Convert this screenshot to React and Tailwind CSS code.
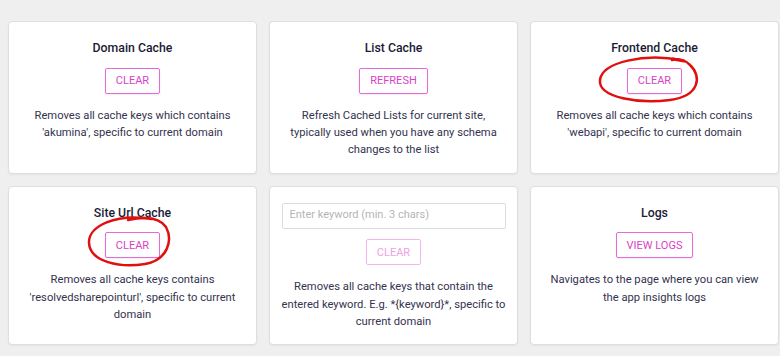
import React from "react";

function Btn({ children, disabled }) {
  return (
    <button
      className={
        disabled
          ? "h-[26px] px-[10px] border border-[#f3b5ec] rounded-[2px] text-[11px] leading-none uppercase text-[#ef9fe4] bg-white"
          : "h-[26px] px-[10px] border border-[#e86ad9] rounded-[2px] text-[11px] leading-none uppercase text-[#d93fc8] bg-white shadow-[0_1px_2px_rgba(0,0,0,0.08)]"
      }
    >
      {children}
    </button>
  );
}

function Card({ title, btn, desc, input, disabled }) {
  return (
    <div className="bg-white border border-[#dedde3] rounded-[4px] shadow-[0_1px_2px_rgba(0,0,0,0.05)] flex flex-col items-center px-[11.5px] pb-[14px] pt-[16px]">
      {input ? (
        <div className="w-full h-[26px] border border-[#dcdcdc] rounded-[2px] flex items-center px-[7px] text-[11px] text-[#b5b5b5]">
          Enter keyword (min. 3 chars)
        </div>
      ) : (
        <div className="text-[12.3px] leading-[20px] font-medium text-[#1c1a36]">{title}</div>
      )}
      <div className={input ? "mt-[10px]" : "mt-[9px]"}>
        <Btn disabled={disabled}>{btn}</Btn>
      </div>
      <p className="mt-[13px] text-[11.2px] leading-[17.4px] text-[#34334f] text-center">{desc}</p>
    </div>
  );
}

export default function App() {
  return (
    <div className="relative w-[780px] h-[356px] bg-[#efefef] font-['Roboto',sans-serif] overflow-hidden">
      <div className="grid grid-cols-[249px_249px_249px] gap-x-[12px] gap-y-[12px] pl-[8px] pt-[21px]">
        <Card title="Domain Cache" btn="Clear" desc="Removes all cache keys which contains 'akumina', specific to current domain" />
        <Card title="List Cache" btn="Refresh" desc="Refresh Cached Lists for current site, typically used when you have any schema changes to the list" />
        <Card title="Frontend Cache" btn="Clear" desc="Removes all cache keys which contains 'webapi', specific to current domain" />
        <Card title="Site Url Cache" btn="Clear" desc="Removes all cache keys contains 'resolvedsharepointurl', specific to current domain" />
        <Card input btn="Clear" disabled desc="Removes all cache keys that contain the entered keyword. E.g. *{keyword}*, specific to current domain" />
        <Card title="Logs" btn="View Logs" desc="Navigates to the page where you can view the app insights logs" />
      </div>
      <svg className="absolute inset-0 pointer-events-none" width="780" height="356" viewBox="0 0 780 356" fill="none">
        <path
          d="M 681 60 C 645 53, 602 62, 600 80 C 598 98, 640 104, 670 100 C 700 96, 702 76, 690 65 C 685 60, 678 58, 672 60"
          stroke="#e01010"
          strokeWidth="2.5"
          strokeLinecap="round"
        />
        <path d="M 673 59 L 684 61" stroke="#e01010" strokeWidth="3" strokeLinecap="round" />
        <path
          d="M 152 219 C 116 213, 88 226, 89 243 C 90 262, 120 268, 145 264 C 168 260, 173 240, 166 227 C 160 218, 146 216, 128 220"
          stroke="#e01010"
          strokeWidth="2.5"
          strokeLinecap="round"
        />
      </svg>
    </div>
  );
}
